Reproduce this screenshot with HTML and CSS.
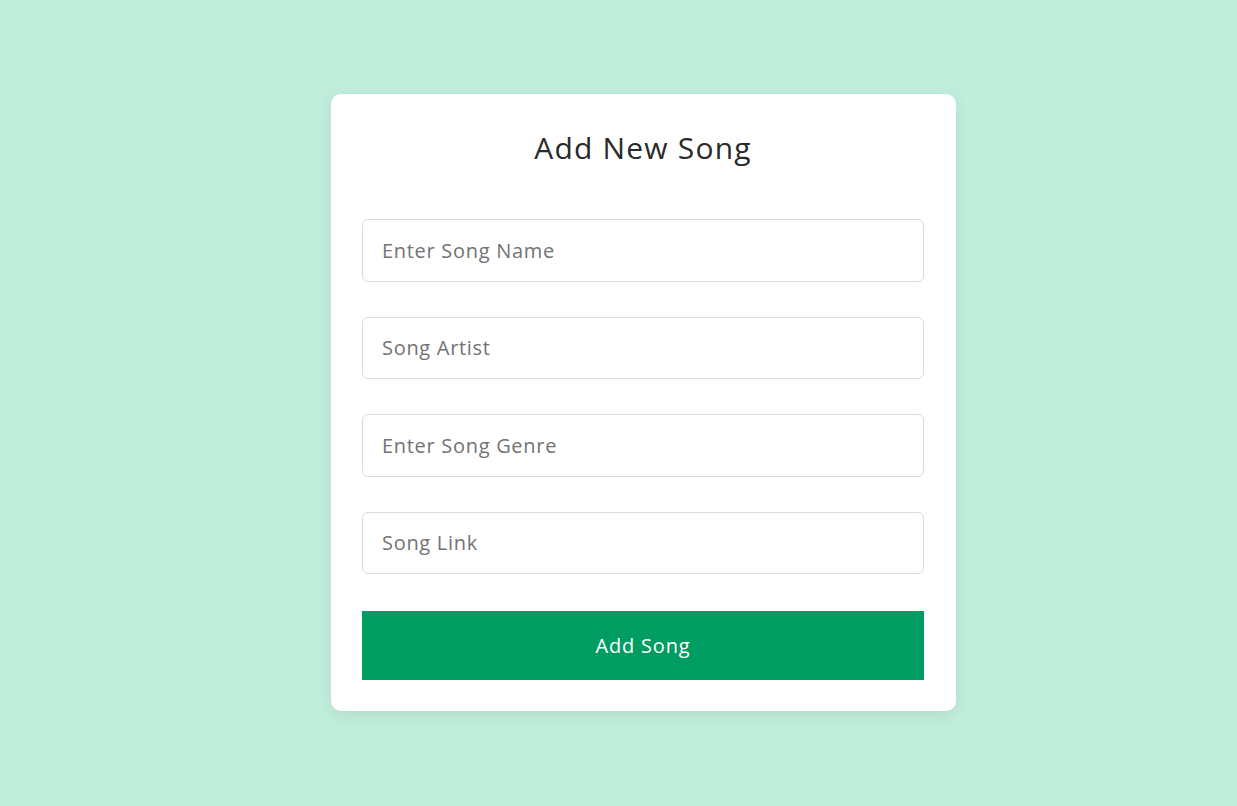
FILE: index.html
```html
<!DOCTYPE html>
<html lang="en">
<head>
<meta charset="utf-8">
<title>Add New Song</title>
<link rel="stylesheet" href="styles.css">
</head>
<body>
<main class="page">
  <form class="card">
    <h1 class="title">Add New Song</h1>
    <div class="fields">
      <input class="field" type="text" placeholder="Enter Song Name">
      <input class="field" type="text" placeholder="Song Artist">
      <input class="field" type="text" placeholder="Enter Song Genre">
      <input class="field" type="text" placeholder="Song Link">
      <button class="submit" type="button">Add Song</button>
    </div>
  </form>
</main>
</body>
</html>
```

FILE: styles.css
```css
* { box-sizing: border-box; }
html, body { margin: 0; padding: 0; }
body {
  background: #c1eedc;
  font-family: "Open Sans", "Noto Sans", sans-serif;
}
.page {
  min-height: 100vh;
  display: flex;
  align-items: center;
  justify-content: center;
  padding-left: 50px;
  padding-bottom: 1px;
}
.card {
  width: 625px;
  background: #ffffff;
  border-radius: 10px;
  padding: 31px 32px 31px 31px;
  box-shadow: 0 4px 16px rgba(0, 0, 0, 0.08);
}
.title {
  margin: 0;
  text-align: center;
  font-size: 30px;
  font-weight: 500;
  letter-spacing: 1.2px;
  line-height: 46px;
  color: #2a2a2a;
}
.fields {
  margin-top: 48px;
  display: flex;
  flex-direction: column;
  gap: 35px;
}
.field {
  height: 62.5px;
  width: 100%;
  border: 1px solid #dcdcdc;
  border-radius: 6px;
  padding: 0 19px;
  font-family: inherit;
  font-size: 20px;
  letter-spacing: 0.7px;
  color: #333;
  outline: none;
}
.field::placeholder { color: #737373; }
.submit {
  margin-top: 2px;
  height: 69px;
  width: 100%;
  border: none;
  background: #009d62;
  color: #ffffff;
  font-family: inherit;
  font-size: 20px;
  letter-spacing: 0.8px;
  cursor: pointer;
}
```
